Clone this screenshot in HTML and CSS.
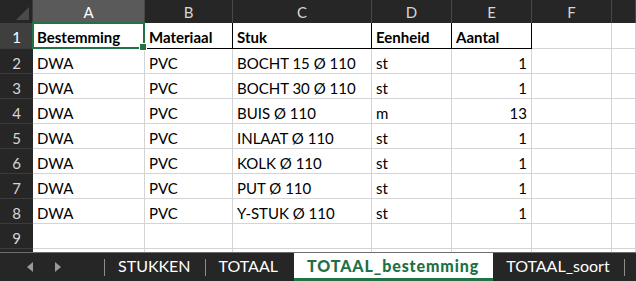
FILE: index.html
```html
<!DOCTYPE html>
<html lang="nl">
<head>
  <meta charset="UTF-8">
  <meta name="viewport" content="width=device-width, initial-scale=1.0">
  <title>TOTAAL_bestemming</title>
  <link rel="stylesheet" href="styles.css">
</head>
<body>
  <div class="sheet">
    <div class="grid">
      <div class="corner"></div>
      <div class="colhead sel">A</div>
      <div class="colhead">B</div>
      <div class="colhead">C</div>
      <div class="colhead">D</div>
      <div class="colhead">E</div>
      <div class="colhead">F</div>
      <div class="colhead last"></div>

      <div class="rowhead sel first">1</div>
      <div class="cell th active">Bestemming</div>
      <div class="cell th">Materiaal</div>
      <div class="cell th">Stuk</div>
      <div class="cell th">Eenheid</div>
      <div class="cell th">Aantal</div>
      <div class="cell first"></div>
      <div class="cell first"></div>

      <div class="rowhead">2</div>
      <div class="cell">DWA</div><div class="cell">PVC</div><div class="cell">BOCHT 15 Ø 110</div><div class="cell">st</div><div class="cell num">1</div><div class="cell"></div><div class="cell"></div>

      <div class="rowhead">3</div>
      <div class="cell">DWA</div><div class="cell">PVC</div><div class="cell">BOCHT 30 Ø 110</div><div class="cell">st</div><div class="cell num">1</div><div class="cell"></div><div class="cell"></div>

      <div class="rowhead">4</div>
      <div class="cell">DWA</div><div class="cell">PVC</div><div class="cell">BUIS Ø 110</div><div class="cell">m</div><div class="cell num">13</div><div class="cell"></div><div class="cell"></div>

      <div class="rowhead">5</div>
      <div class="cell">DWA</div><div class="cell">PVC</div><div class="cell">INLAAT Ø 110</div><div class="cell">st</div><div class="cell num">1</div><div class="cell"></div><div class="cell"></div>

      <div class="rowhead">6</div>
      <div class="cell">DWA</div><div class="cell">PVC</div><div class="cell">KOLK Ø 110</div><div class="cell">st</div><div class="cell num">1</div><div class="cell"></div><div class="cell"></div>

      <div class="rowhead">7</div>
      <div class="cell">DWA</div><div class="cell">PVC</div><div class="cell">PUT Ø 110</div><div class="cell">st</div><div class="cell num">1</div><div class="cell"></div><div class="cell"></div>

      <div class="rowhead">8</div>
      <div class="cell">DWA</div><div class="cell">PVC</div><div class="cell">Y-STUK Ø 110</div><div class="cell">st</div><div class="cell num">1</div><div class="cell"></div><div class="cell"></div>

      <div class="rowhead">9</div>
      <div class="cell"></div><div class="cell"></div><div class="cell"></div><div class="cell"></div><div class="cell"></div><div class="cell"></div><div class="cell"></div>

      <div class="rowhead"></div>
      <div class="cell"></div><div class="cell"></div><div class="cell"></div><div class="cell"></div><div class="cell"></div><div class="cell"></div><div class="cell"></div>
    </div>
  </div>

  <div class="tabs">
    <div class="nav">
      <span class="arrow left"></span>
      <span class="arrow right"></span>
    </div>
    <span class="sep"></span>
    <div class="tab">STUKKEN</div>
    <span class="sep"></span>
    <div class="tab">TOTAAL</div>
    <div class="tab current">TOTAAL_bestemming</div>
    <div class="tab">TOTAAL_soort</div>
    <span class="sep"></span>
  </div>
</body>
</html>
```

FILE: styles.css
```css
* {
  box-sizing: border-box;
}
body {
  margin: 0;
  width: 636px;
  height: 281px;
  overflow: hidden;
  background-color: #262626;
  font-family: Lato, "Open Sans", sans-serif;
  font-size: 15px;
}
.sheet {
  height: 252px;
  overflow: hidden;
  background-color: #ffffff;
}
.grid {
  display: grid;
  grid-template-columns: 33px 112px 88px 139px 80px 80px 80px 1fr;
  grid-template-rows: 23px 26px repeat(9, 25px);
}
.corner {
  background-color: #262626;
  border-right: 1px solid #3c3c3c;
  position: relative;
}
.corner::after {
  content: "";
  position: absolute;
  right: 3px;
  bottom: 3px;
  border-style: solid;
  border-width: 0 0 13px 13px;
  border-color: transparent transparent #4a4a4a transparent;
}
.colhead {
  background-color: #262626;
  color: #d6d6d6;
  border-right: 1px solid #474747;
  display: flex;
  align-items: center;
  justify-content: center;
  padding-top: 1px;
}
.colhead.sel {
  background-color: #5a5a5a;
  color: #ffffff;
}
.rowhead {
  background-color: #262626;
  color: #d6d6d6;
  border-bottom: 1px solid #3c3c3c;
  display: flex;
  align-items: center;
  justify-content: center;
  padding-top: 3px;
}
.rowhead.sel {
  background-color: #3f3f3f;
  color: #ffffff;
}
.cell {
  border-right: 1px solid #d4d4d4;
  border-bottom: 1px solid #d4d4d4;
  color: #000000;
  padding: 3px 4px 0 4px;
  display: flex;
  align-items: center;
  white-space: nowrap;
}
.cell.num {
  justify-content: flex-end;
}
.cell.th {
  font-weight: bold;
  border-right-color: #000000;
  border-bottom-color: #000000;
}
.cell.active {
  position: relative;
}
.cell.active::before {
  content: "";
  position: absolute;
  left: -1px;
  top: -1px;
  right: -1px;
  bottom: -1px;
  border: 2px solid #217346;
}
.cell.active::after {
  content: "";
  position: absolute;
  right: -3px;
  bottom: -3px;
  width: 6px;
  height: 6px;
  background-color: #217346;
  border: 1px solid #ffffff;
}
.tabs {
  height: 29px;
  border-top: 1px solid #6e6e6e;
  display: flex;
  align-items: stretch;
  color: #ffffff;
  font-size: 16px;
}
.nav {
  width: 104px;
  display: flex;
  align-items: center;
  padding-left: 27px;
  gap: 22px;
}
.arrow {
  width: 0;
  height: 0;
  border-style: solid;
  border-color: transparent;
}
.arrow.left {
  border-width: 5px 6px 5px 0;
  border-right-color: #9a9a9a;
}
.arrow.right {
  border-width: 5px 0 5px 6px;
  border-left-color: #9a9a9a;
}
.sep {
  width: 1px;
  margin: 6px 0 5px;
  background-color: #8c8c8c;
}
.tab {
  padding: 0 14px 3px 13px;
  display: flex;
  align-items: center;
}
.tab.current {
  margin-left: 2px;
  padding: 0 14px 0 13px;
  background-color: #ffffff;
  color: #1e7145;
  font-weight: 900;
  letter-spacing: 0.9px;
  border-bottom: 3px solid #217346;
}
```
